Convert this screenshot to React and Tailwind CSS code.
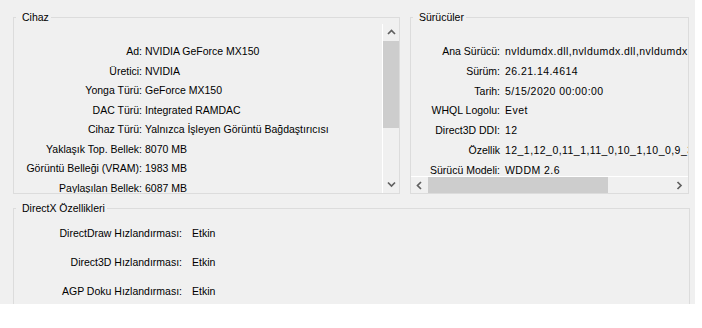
import React from "react";

const deviceRows = [
  ["Ad:", "NVIDIA GeForce MX150"],
  ["Üretici:", "NVIDIA"],
  ["Yonga Türü:", "GeForce MX150"],
  ["DAC Türü:", "Integrated RAMDAC"],
  ["Cihaz Türü:", "Yalnızca İşleyen Görüntü Bağdaştırıcısı"],
  ["Yaklaşık Top. Bellek:", "8070 MB"],
  ["Görüntü Belleği (VRAM):", "1983 MB"],
  ["Paylaşılan Bellek:", "6087 MB"],
];

const driverRows = [
  ["Ana Sürücü:", "nvldumdx.dll,nvldumdx.dll,nvldumdx.dll,nvldumdx.dll"],
  ["Sürüm:", "26.21.14.4614"],
  ["Tarih:", "5/15/2020 00:00:00"],
  ["WHQL Logolu:", "Evet"],
  ["Direct3D DDI:", "12"],
  ["Özellik", "12_1,12_0,11_1,11_0,10_1,10_0,9_3,9_2,9_1"],
  ["Sürücü Modeli:", "WDDM 2.6"],
];

const dxRows = [
  ["DirectDraw Hızlandırması:", "Etkin"],
  ["Direct3D Hızlandırması:", "Etkin"],
  ["AGP Doku Hızlandırması:", "Etkin"],
];

// small scrollbar chevrons, windows 10 style
const Arrow = ({ dir }) => {
  const d = {
    up: "M1 5 L4.5 1.5 L8 5",
    down: "M1 1.5 L4.5 5 L8 1.5",
    left: "M5 1 L1.5 4.5 L5 8",
    right: "M1.5 1 L5 4.5 L1.5 8",
  }[dir];
  const vertical = dir === "up" || dir === "down";
  return (
    <svg
      width={vertical ? 9 : 7}
      height={vertical ? 7 : 9}
      viewBox={vertical ? "0 0 9 7" : "0 0 7 9"}
      fill="none"
      stroke="#606060"
      strokeWidth="1.7"
    >
      <path d={d} />
    </svg>
  );
};

const GroupBox = ({ title, className, children }) => (
  <div className={`relative border border-[#dcdcdc] ${className}`}>
    <span className="absolute -top-[8px] left-[2px] bg-[#f0f0f0] pl-[6px] pr-[2px] leading-[14px]">
      {title}
    </span>
    {children}
  </div>
);

export default function App() {
  return (
    <div
      className="w-[702px] h-[328px] bg-white text-black text-[10.5px]"
      style={{ fontFamily: '"Liberation Sans", Arial, sans-serif' }}
    >
      <div className="w-[695px] h-[304px] bg-[#f0f0f0] overflow-hidden pl-[13px] pt-[17px]">
        <div className="flex gap-[10px]">
          {/* Cihaz */}
          <GroupBox title="Cihaz" className="w-[387px] h-[177px]">
            <div className="flex h-[169px] mt-[6px]">
              <div className="flex-1 overflow-hidden pt-[18px]">
                {deviceRows.map(([label, value]) => (
                  <div key={label} className="flex items-center h-[19.6px] whitespace-nowrap">
                    <span className="w-[128px] shrink-0 text-right">{label}</span>
                    <span className="ml-[3px]">{value}</span>
                  </div>
                ))}
              </div>
              <div className="w-[17px] border-l border-white flex flex-col">
                <div className="h-[17px] flex items-center justify-center">
                  <Arrow dir="up" />
                </div>
                <div className="h-[87px] bg-[#cdcdcd]" />
                <div className="flex-1" />
                <div className="h-[17px] flex items-center justify-center">
                  <Arrow dir="down" />
                </div>
              </div>
            </div>
          </GroupBox>

          {/* Sürücüler */}
          <GroupBox title="Sürücüler" className="w-[279px] h-[177px] flex flex-col">
            <div className="h-[158px] overflow-hidden pt-[24px]">
              {driverRows.map(([label, value]) => (
                <div key={label} className="flex items-center h-[19.8px] whitespace-nowrap">
                  <span className="w-[89px] shrink-0 text-right">{label}</span>
                  <span className="ml-[5px] tracking-[0.45px]">{value}</span>
                </div>
              ))}
            </div>
            <div className="h-[17px] border-t border-white flex">
              <div className="w-[17px] flex items-center justify-center">
                <Arrow dir="left" />
              </div>
              <div className="w-[180px] bg-[#cdcdcd]" />
              <div className="flex-1" />
              <div className="w-[17px] flex items-center justify-center">
                <Arrow dir="right" />
              </div>
            </div>
          </GroupBox>
        </div>

        {/* DirectX */}
        <GroupBox title="DirectX Özellikleri" className="w-[677px] h-[110px] mt-[14px]">
          <div className="pt-[10px]">
            {dxRows.map(([label, value]) => (
              <div key={label} className="flex items-center h-[29px] whitespace-nowrap">
                <span className="w-[168px] shrink-0 text-right">{label}</span>
                <span className="ml-[10px]">{value}</span>
              </div>
            ))}
          </div>
        </GroupBox>
      </div>
    </div>
  );
}
